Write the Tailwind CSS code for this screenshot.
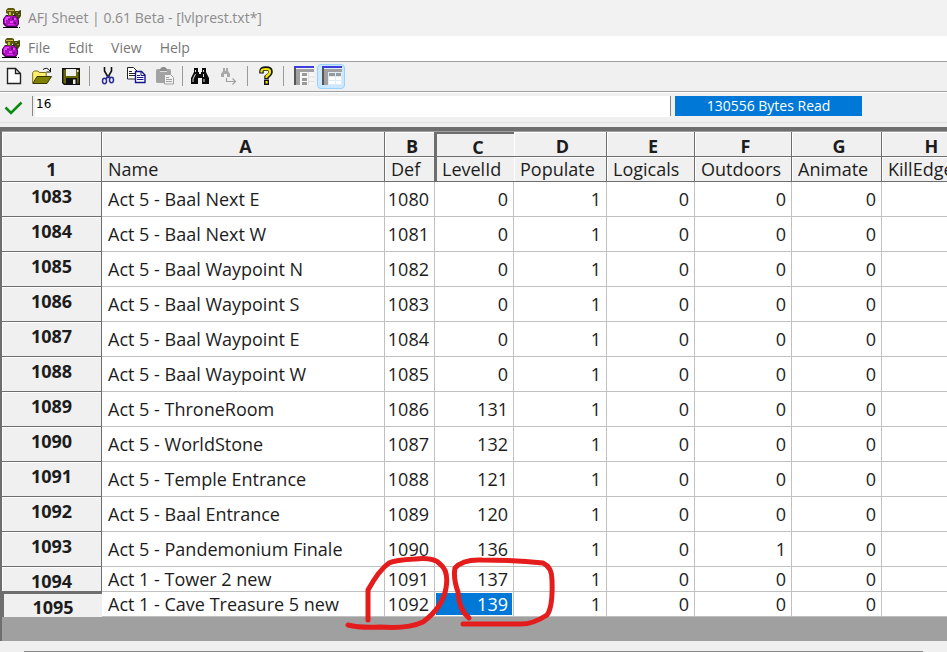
<!DOCTYPE html>
<html lang="en">
<head>
    <meta charset="UTF-8">
    <meta name="viewport" content="width=device-width, initial-scale=1.0">
    <title>AFJ Sheet</title>
    <script src="https://cdn.jsdelivr.net/npm/@tailwindcss/browser@4"></script>
</head>
<body class="flex h-screen flex-col overflow-hidden bg-[#f0f0f0] font-['Open_Sans','Noto_Sans',sans-serif] text-[#1c1c1c]">

<!-- potion icon shared by the title bar and the menu bar -->
<svg class="hidden">
    <symbol id="potion" viewBox="0 0 20 20">
        <path d="M12 3h4l3-1v6l-2 3h-3l-2-3z" fill="#454a0c"/>
        <path d="M14 4h2v1h-2zM16 6h2v1h-2zM14 8h1v1h-1z" fill="#8f8a30"/>
        <path d="M4 7h9l2 2 2 3v4l-2 3H4l-3-3v-5z" fill="#3d0648"/>
        <path d="M4 8h9l2 2 1 3v3l-2 2H5l-3-3v-4z" fill="#b010c4"/>
        <path d="M4 9h4v1H6v2H4v3H3v-4zM8 13h3v2H8zM12 10h2v2h-2z" fill="#ea4af4"/>
        <path d="M6 16h6v1H6z" fill="#dc30e8"/>
        <path d="M10 9h2v3h-2zM12 14h2v2h-2zM6 11h2v1H6z" fill="#740884"/>
        <path d="M5 1l1-1h5l2 1v4l-2 1v2H6V6L4 5V2z" fill="#5c5808"/>
        <path d="M5 2h7v1H5zM7 4h2v3H7z" fill="#c2ba48"/>
        <path d="M1 19h15v1H1zM17 19h1v1h-1z" fill="#000"/>
    </symbol>
</svg>

<header class="flex h-9 shrink-0 items-center gap-1.5 bg-[#f2f2f2] pb-px pl-[2px]">
    <svg class="size-5" viewBox="0 0 20 20"><use href="#potion"/></svg>
    <h1 class="text-[14px] leading-5 text-[#8c8c8c]">AFJ Sheet | 0.61 Beta - [lvlprest.txt*]</h1>
</header>

<nav class="flex h-[25px] shrink-0 items-center bg-white pb-px pl-[1px] text-[14px] leading-5 text-[#777]">
    <svg class="mr-[7px] size-5" viewBox="0 0 20 20"><use href="#potion"/></svg>
    <div class="flex gap-[18px]">
        <button type="button">File</button>
        <button type="button">Edit</button>
        <button type="button">View</button>
        <button type="button">Help</button>
    </div>
</nav>

<div class="flex h-[31px] shrink-0 items-center border-t border-b border-[#a0a0a0] pb-px pl-1">
    <div class="flex gap-2">
        <button type="button" aria-label="New" class="size-5">
            <svg viewBox="0 0 20 20"><path d="M3.5 2.5h8l5 5v10h-13z" fill="#fff" stroke="#222" stroke-width="1.4"/><path d="M11.5 2.5v5h5" fill="none" stroke="#222" stroke-width="1.4"/></svg>
        </button>
        <button type="button" aria-label="Open" class="size-5">
            <svg viewBox="0 0 20 20"><path d="M.7 17V6.500l1.500-1.500h4l1 1.500h7V10" fill="#ffee70" stroke="#77731a"/><path d="M.8 17.500L5 10.500h14.500l-4.500 7z" fill="#808000" stroke="#3a3a00"/><path d="M11 3.500q4-3 7 1.500M18.500 2v4h-4" fill="none" stroke="#111"/></svg>
        </button>
        <button type="button" aria-label="Save" class="ml-px size-5">
            <svg viewBox="0 0 20 20"><path d="M1.700 2.700h16.600v15.600H3.200l-1.500-1.500z" fill="#66660a" stroke="#111" stroke-width="1.400"/><path d="M5 3h10v7H5z" fill="#f0f0f0"/><path d="M5 12h11v6H5z" fill="#111"/><path d="M12 13.500h2.500V18H12z" fill="#eee"/><path d="M16 4h1.500v2H16z" fill="#ddd"/></svg>
        </button>
    </div>
    <div class="mx-2 h-5 w-px bg-[#999]"></div>
    <div class="flex gap-2">
        <button type="button" aria-label="Cut" class="size-5">
            <svg viewBox="0 0 20 20"><path d="M6.500 1v4l4 7M13.500 1v4l-4 7" fill="none" stroke="#111" stroke-width="1.600"/><g fill="none" stroke="#2a2a9a" stroke-width="1.500"><path d="M10 10l-2 3M10 10l3 2"/><ellipse cx="6.500" cy="15" rx="2" ry="2.700"/><ellipse cx="13.500" cy="14" rx="2" ry="2.700"/></g></svg>
        </button>
        <button type="button" aria-label="Copy" class="size-5">
            <svg viewBox="0 0 20 20"><path d="M1.500 1.500h6l3.500 3.500v8H1.500z" fill="#fff" stroke="#222"/><path d="M3 5.500h3M3 7.500h6M3 9.500h6" stroke="#222"/><path d="M9.500 5.500h6l3.500 3.500v7.500H9.500z" fill="#fff" stroke="#16168a" stroke-width="1.400"/><path d="M15 5.500v4h4M11 9.500h3M11 11.500h6.500M11 13.500h6.500" fill="none" stroke="#16168a"/></svg>
        </button>
        <button type="button" aria-label="Paste" disabled class="ml-px size-5">
            <svg viewBox="0 0 20 20"><rect x="1" y="3" width="15" height="14" rx="1.500" fill="#a3a3a3"/><path d="M5 3l2-2h3l2 2v2H5z" fill="#8e8e8e"/><path d="M5 5.500h7" stroke="#ddd"/><path d="M9.500 8.500h6l3 3v6.500h-9z" fill="#f2f2f2" stroke="#a0a0a0"/><path d="M11 11.500h3M11 13.500h6M11 15.500h6" stroke="#a0a0a0"/></svg>
        </button>
    </div>
    <div class="mx-[7px] h-5 w-px bg-[#999]"></div>
    <div class="flex gap-2">
        <button type="button" aria-label="Find" class="size-5">
            <svg viewBox="0 0 20 20"><path d="M4 2h4v4h1v2h2V6h1V2h4v4l3 6v6h-7v-6H8v6H1v-6l3-6z" fill="#0b0b0b"/><path d="M5.500 4v2M5.500 8L3 13v3M13.500 4v2M13.500 8v3M14 13v3" fill="none" stroke="#ddd"/></svg>
        </button>
        <button type="button" aria-label="Find next" disabled class="ml-px size-5">
            <svg viewBox="0 0 20 20"><path d="M4 2h2v3h1V2h2v3l2 3v3H8V8H5v3H2V8l2-3z" fill="#a8a8a8"/><path d="M7.500 12v3.500H16M13.500 12.500l3 3-3 3" fill="none" stroke="#a0a0a0" stroke-width="1.200"/></svg>
        </button>
    </div>
    <div class="mx-2 h-5 w-px bg-[#999]"></div>
    <button type="button" aria-label="Help" class="size-5">
        <svg viewBox="0 0 20 20"><path d="M5.500 7.500V5q0-2.500 4.500-2.500T14.500 5v1.500Q14.500 8 10.500 11v2" fill="none" stroke="#111" stroke-width="4.400"/><path d="M8 13.500h5V19H8z" fill="#111"/><path d="M5.500 6.500V5q0-2 4.500-2t4 3q0 2-3.500 4.500V12" fill="none" stroke="#f0e800" stroke-width="2.200"/><path d="M9.500 15h2.200v2.500H9.500z" fill="#f0e800"/></svg>
    </button>
    <div class="mx-[7px] h-5 w-px bg-[#999]"></div>
    <button type="button" aria-label="Freeze column" class="flex h-6 w-[25px] items-center justify-center">
        <svg class="h-5 w-[21px]" viewBox="0 0 21 20"><path d="M1 1h20v18H1z" fill="#f6f6f6"/><path d="M1 3h20v3H1zM3 3h4v16H3z" fill="#a0a0a0"/><path d="M1 0h20v2H1z" fill="#3c3cd8"/><path d="M1 2h2v17H1z" fill="#555"/><path d="M9 7h5v3H9zM9 12h5v3H9zM9 16h5v3H9z" fill="#999"/><path d="M15.500 6v13M15 11h6M15 15.500h6" fill="none" stroke="#ddd"/></svg>
    </button>
    <button type="button" aria-label="Freeze row" aria-pressed="true" class="ml-px flex h-[25px] w-[28px] items-center justify-center rounded-sm border border-[#99d1ff] bg-[#cce8ff]">
        <svg class="h-5 w-[21px]" viewBox="0 0 21 20"><path d="M1 1h20v18H1z" fill="#dcecf8"/><path d="M1 3h20v3H1zM3 3h4v16H3z" fill="#a0a0a0"/><path d="M1 0h20v2H1z" fill="#3c3cd8"/><path d="M1 2h2v17H1z" fill="#555"/><path d="M8 7h6v3H8zM15 7h5v3h-5z" fill="#999"/><path d="M8 11h6v3H8zM15 11h5v3h-5zM8 15h6v3H8zM15 15h5v3h-5z" fill="#fff"/></svg>
    </button>
</div>

<div class="flex h-[31px] shrink-0 items-center border-t border-b border-t-white border-b-[#dedede] pb-[3px] pl-1">
    <button type="button" aria-label="Accept" class="size-5">
        <svg viewBox="0 0 20 20"><path d="M1.500 11.500l5.500 5.500L17.500 6.500" fill="none" stroke="#0a8a14" stroke-width="2.500"/></svg>
    </button>
    <div class="ml-2 h-5 w-px bg-[#888]"></div>
    <input type="text" aria-label="Cell value" value="16" class="ml-[2px] h-[21px] min-w-0 basis-[635px] bg-white pb-[5px] pl-px font-['DejaVu_Sans',sans-serif] text-[12px] leading-4 text-black outline-none">
    <div class="h-5 w-px bg-[#888]"></div>
    <output class="ml-1 h-5 w-[187px] bg-[#0078d7] text-center text-[14px] leading-5 text-white">130556 Bytes Read</output>
</div>

<main class="relative mt-1 shrink-0 overflow-hidden border-t-4 border-l-2 border-[#6e6e6e] bg-[#a0a0a0] pt-px pb-6">
    <table class="w-[975px] table-fixed border-separate border-spacing-0 bg-white text-[18px] leading-6">
        <colgroup>
            <col class="w-[100px]"><col class="w-[283px]"><col class="w-[50px]"><col class="w-[79px]"><col class="w-[93px]"><col class="w-[88px]"><col class="w-[97px]"><col class="w-[90px]"><col class="w-[95px]">
        </colgroup>
        <thead id="head"></thead>
        <tbody id="rows"></tbody>
    </table>

    <!-- hand-drawn marks -->
    <svg class="pointer-events-none absolute top-[424px] left-[338px] h-[90px] w-[220px]" viewBox="340 555 220 90" fill="none" stroke="#e51c1c" stroke-width="5" stroke-linecap="round" stroke-linejoin="round">
        <path d="M368 620V590Q379 570 389 563Q395 560 415 559Q434 557 440 564Q449 571 446 588Q443 607 423 622Q408 629 380 627Q360 628 348 625"/>
        <path d="M469 618Q459 610 458 592Q453 578 455 568Q463 559 482 560Q515 560 543 563Q552 567 552 580Q553 607 547 615Q532 625 518 624H463"/>
    </svg>
</main>

<footer class="flex grow flex-col justify-end px-6">
    <div class="h-px bg-[#8a8a8a]"></div>
</footer>

<script>
    const letters = ['A', 'B', 'C', 'D', 'E', 'F', 'G', 'H'];
    const names = ['Name', 'Def', 'LevelId', 'Populate', 'Logicals', 'Outdoors', 'Animate', 'KillEdge'];
    const rows = [
        [1083, 'Act 5 - Baal Next E', 1080, 0, 1, 0, 0, 0],
        [1084, 'Act 5 - Baal Next W', 1081, 0, 1, 0, 0, 0],
        [1085, 'Act 5 - Baal Waypoint N', 1082, 0, 1, 0, 0, 0],
        [1086, 'Act 5 - Baal Waypoint S', 1083, 0, 1, 0, 0, 0],
        [1087, 'Act 5 - Baal Waypoint E', 1084, 0, 1, 0, 0, 0],
        [1088, 'Act 5 - Baal Waypoint W', 1085, 0, 1, 0, 0, 0],
        [1089, 'Act 5 - ThroneRoom', 1086, 131, 1, 0, 0, 0],
        [1090, 'Act 5 - WorldStone', 1087, 132, 1, 0, 0, 0],
        [1091, 'Act 5 - Temple Entrance', 1088, 121, 1, 0, 0, 0],
        [1092, 'Act 5 - Baal Entrance', 1089, 120, 1, 0, 0, 0],
        [1093, 'Act 5 - Pandemonium Finale', 1090, 136, 1, 0, 1, 0],
        [1094, 'Act 1 - Tower 2 new', 1091, 137, 1, 0, 0, 0],
        [1095, 'Act 1 - Cave Treasure 5 new', 1092, 139, 1, 0, 0, 0]
    ];

    const th = 'h-[25px] overflow-hidden border-r border-b border-[#6e6e6e] bg-[#f0f0f0] p-0 whitespace-nowrap shadow-[inset_1px_1px_0_#fff]';
    const thActive = 'h-[25px] overflow-hidden border-b border-l-2 border-[#6e6e6e] bg-[#f0f0f0] p-0 whitespace-nowrap';

    document.getElementById('head').innerHTML =
        `<tr><th class="${th}"></th>` +
        letters.map(l => `<th scope="col" class="${l === 'C' ? thActive + ' border-t-2' : th} font-bold"><div class="h-[22px] pl-[5px] leading-[26px]">${l}</div></th>`).join('') +
        `</tr><tr><th scope="row" class="${th} font-bold">1</th>` +
        names.map(n => `<th scope="col" class="${n === 'LevelId' ? thActive + ' pl-[5px]' : th + ' pl-[6px]'} text-left font-normal"><div class="h-6 overflow-hidden">${n}</div></th>`).join('') +
        '</tr>';

    // the last two rows keep the short default height
    document.getElementById('rows').innerHTML = rows.map((row, i) => {
        const [num, name, ...values] = row;
        const short = i > 10;
        const height = short ? 'h-[25px]' : 'h-[35px]';
        const label = short ? 'pt-[3px]' : 'pb-1.5';
        const last = i === rows.length - 1;
        const cells = values.map((v, c) => {
            const selected = last && c === 1;
            return `<td class="border-r border-b border-[#c0c0c0] p-0 text-right">` +
                (selected ? `<div class="mr-px ml-px bg-[#0078d7] pr-1 leading-[22px] text-white">${v}</div>` : `<div class="pr-[5px]">${v}</div>`) + '</td>';
        }).join('');
        return `<tr class="${height}"><th scope="row" class="${last ? 'border-t-2 border-l-2' : 'border-r border-b shadow-[inset_1px_1px_0_#fff]'} border-[#6e6e6e] bg-[#f0f0f0] p-0 font-bold"><div class="${label} leading-5">${num}</div></th>` +
            `<td class="border-r border-b border-[#c0c0c0] p-0 pl-[6px] whitespace-nowrap">${name}</td>${cells}<td class="border-b border-[#c0c0c0] p-0"></td></tr>`;
    }).join('');
</script>

</body>
</html>
